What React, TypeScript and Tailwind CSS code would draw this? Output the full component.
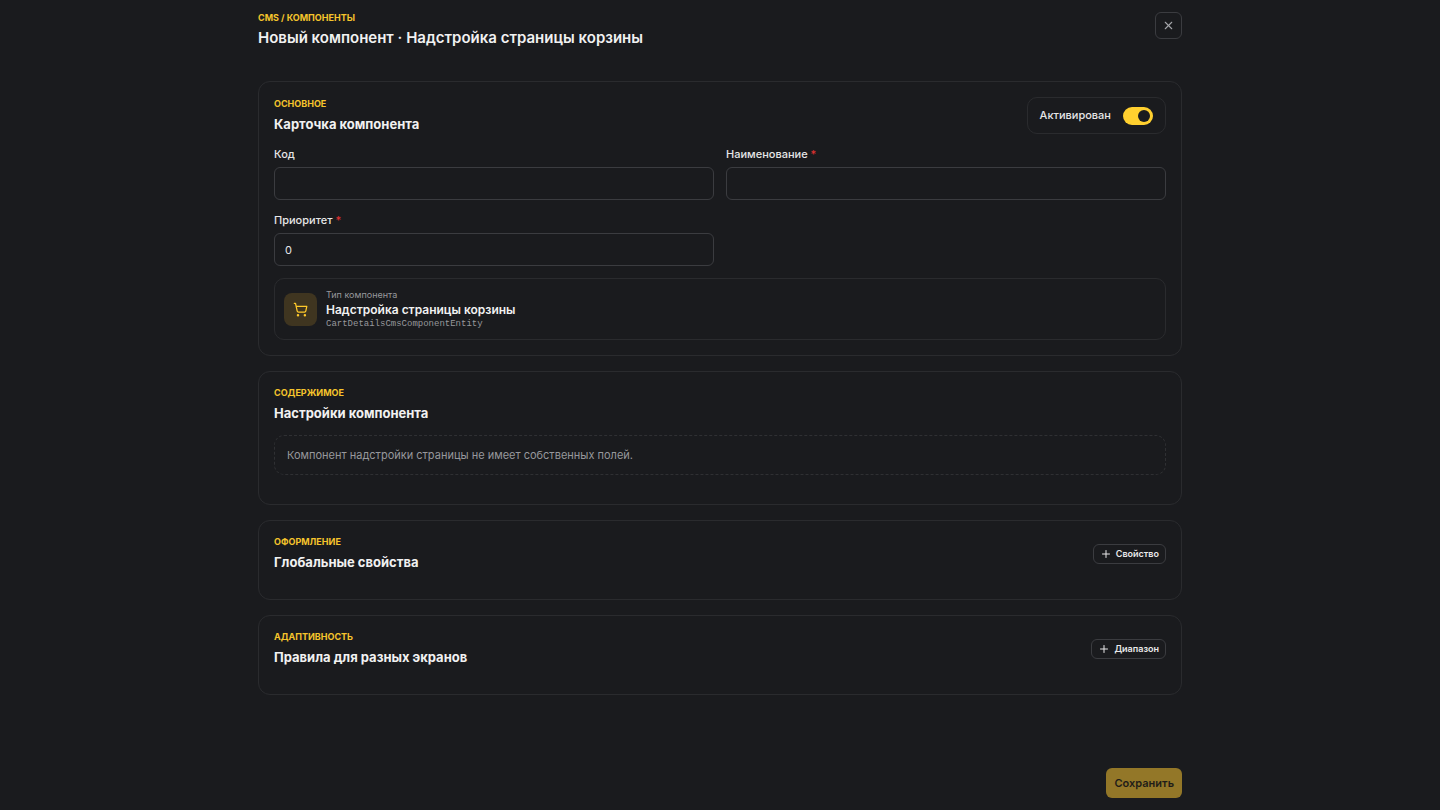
import { useState, type ReactNode } from "react";
import { Plus, ShoppingCart, X } from "lucide-react";

function Eyebrow({ children }: { children: ReactNode }) {
  return <p className="text-[9px] font-bold uppercase leading-3 text-[#f5c42c]">{children}</p>;
}

function Section({
  eyebrow,
  title,
  action,
  children,
}: {
  eyebrow: string;
  title: string;
  action?: ReactNode;
  children?: ReactNode;
}) {
  return (
    <section className="rounded-xl border border-[#2a2b2e] p-[15px]">
      <div className="mb-3 flex items-center justify-between gap-4">
        <div className="flex flex-col gap-1">
          <Eyebrow>{eyebrow}</Eyebrow>
          <h2 className="text-[13px] font-bold leading-5 text-[#f1f1f1]">{title}</h2>
        </div>
        {action}
      </div>
      {children}
    </section>
  );
}

function Field({
  id,
  label,
  required,
  defaultValue,
}: {
  id: string;
  label: string;
  required?: boolean;
  defaultValue?: string;
}) {
  return (
    <div className="flex flex-col gap-[5px]">
      <label htmlFor={id} className="text-[11px] font-medium leading-4 text-[#e6e6e7]">
        {label}
        {required && <span className="text-[#e03131]"> *</span>}
      </label>
      <input
        id={id}
        required={required}
        defaultValue={defaultValue}
        className="h-[33px] w-full rounded-md border border-[#3b3c40] bg-transparent px-[10px] text-[11px] text-[#e6e6e7] shadow-none outline-none focus:border-[#ffd02f]"
      />
    </div>
  );
}

function AddButton({ children }: { children: ReactNode }) {
  return (
    <button
      type="button"
      className="flex h-5 items-center gap-1 rounded-md border border-[#3b3c40] px-[6px] text-[9px] font-semibold text-[#e9e9ea]"
    >
      <Plus size={12} strokeWidth={2} />
      {children}
    </button>
  );
}

export default function App() {
  const [active, setActive] = useState(true);

  return (
    <main className="flex min-h-screen flex-col bg-[#1a1b1e] py-3 font-['Inter','Liberation_Sans',sans-serif]">
      <div className="mx-auto flex w-full max-w-[924px] grow flex-col">
        <header className="mb-[33px] flex items-start justify-between">
          <div className="flex flex-col gap-1">
            <Eyebrow>CMS / Компоненты</Eyebrow>
            <h1 className="text-[15px] font-semibold leading-5 text-[#f1f1f1]">
              Новый компонент · Надстройка страницы корзины
            </h1>
          </div>
          <button
            type="button"
            aria-label="Закрыть"
            className="grid size-[27px] place-items-center rounded-md border border-[#3b3c40] text-[#a5a6aa]"
          >
            <X size={13} strokeWidth={2} />
          </button>
        </header>

        <form className="flex grow flex-col gap-[15px]">
          <Section
            eyebrow="Основное"
            title="Карточка компонента"
            action={
              <label className="flex h-[37px] items-center gap-3 rounded-[10px] border border-[#2a2b2e] px-3 text-[11px] font-medium text-[#e6e6e7]">
                Активирован
                <span className="relative flex">
                  <input
                    type="checkbox"
                    role="switch"
                    checked={active}
                    onChange={(e) => setActive(e.target.checked)}
                    className="peer h-[18px] w-[30px] appearance-none rounded-full bg-[#3b3c40] checked:bg-[#ffd02f]"
                  />
                  <span className="pointer-events-none absolute left-[3px] top-[3px] size-3 rounded-full bg-[#1a1b1e] peer-checked:left-[15px]" />
                </span>
              </label>
            }
          >
            <div className="grid grid-cols-2 gap-3">
              <Field id="code" label="Код" />
              <Field id="name" label="Наименование" required />
              <Field id="priority" label="Приоритет" required defaultValue="0" />
              <div className="col-span-2 flex h-[62px] items-center gap-[9px] rounded-[10px] border border-[#2a2b2e] px-[9px]">
                <span className="grid size-[33px] place-items-center rounded-lg bg-[#3f3520] text-[#ffc92a]">
                  <ShoppingCart size={15} strokeWidth={2} />
                </span>
                <div>
                  <p className="text-[9px] leading-[14px] text-[#97989c]">Тип компонента</p>
                  <p className="text-xs font-semibold leading-4 text-[#f1f1f1]">Надстройка страницы корзины</p>
                  <p className="font-['Liberation_Mono',monospace] text-[9px] leading-3 text-[#97989c]">
                    CartDetailsCmsComponentEntity
                  </p>
                </div>
              </div>
            </div>
          </Section>

          <Section eyebrow="Содержимое" title="Настройки компонента">
            <p className="mb-[14px] rounded-[10px] border border-dashed border-[#2f3033] px-3 py-[11px] text-[11px] leading-4 text-[#97989c]">
              Компонент надстройки страницы не имеет собственных полей.
            </p>
          </Section>

          <Section eyebrow="Оформление" title="Глобальные свойства" action={<AddButton>Свойство</AddButton>} />

          <Section
            eyebrow="Адаптивность"
            title="Правила для разных экранов"
            action={<AddButton>Диапазон</AddButton>}
          />

          <footer className="mt-auto flex justify-end">
            <button
              type="submit"
              disabled
              className="h-[30px] rounded-md bg-[#937728] px-2 text-[11px] font-semibold text-[#1f1d18]"
            >
              Сохранить
            </button>
          </footer>
        </form>
      </div>
    </main>
  );
}
